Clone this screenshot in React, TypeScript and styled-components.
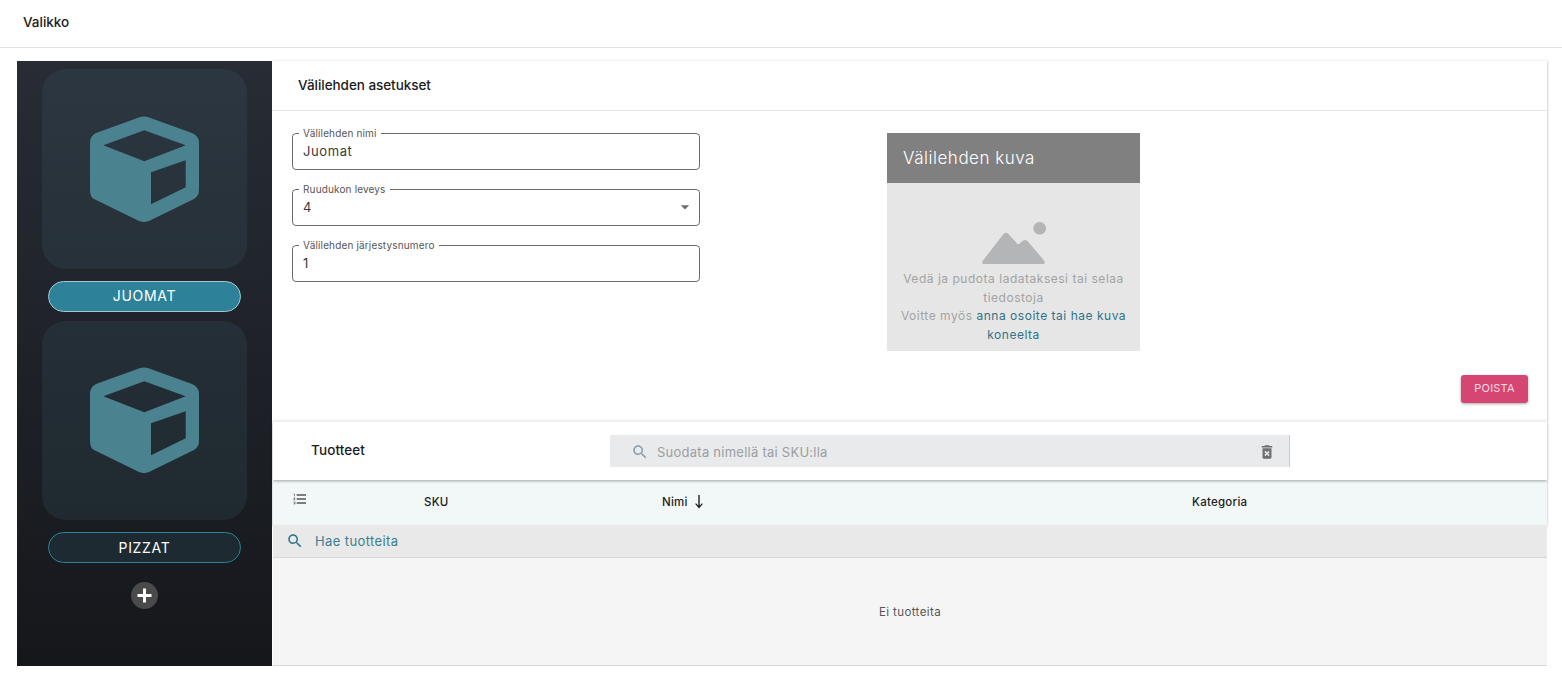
import React from "react"
import styled, { createGlobalStyle } from "styled-components"

const GlobalStyle = createGlobalStyle`
  html, body {
    margin: 0;
    padding: 0;
    background: #fff;
    font-family: Inter, "Open Sans", "Liberation Sans", sans-serif;
    color: #1c1c1c;
  }
  * { box-sizing: border-box; }
`

const TopBar = styled.header`
  height: 48px;
  padding: 0 23px;
  display: flex;
  align-items: center;
  border-bottom: 1px solid #e2e2e2;
  font-size: 13.5px;
  font-weight: 500;
  padding-bottom: 3px;
`

const Layout = styled.div`
  display: flex;
  padding: 13px 15px 0 17px;
`

const Sidebar = styled.aside`
  width: 255px;
  height: 605px;
  flex-shrink: 0;
  padding-top: 8px;
  display: flex;
  flex-direction: column;
  align-items: center;
  background: linear-gradient(180deg, #272c35 0%, #15171b 100%);
`

const Tile = styled.div`
  width: 205px;
  height: 199.5px;
  flex-shrink: 0;
  display: flex;
  align-items: center;
  justify-content: center;
  border-radius: 24px;
  background: rgba(75, 130, 144, 0.13);
`

const Pill = styled.div<{ $active?: boolean }>`
  width: 193px;
  height: 31px;
  margin: 12px 0 9px;
  padding-bottom: 1px;
  flex-shrink: 0;
  display: flex;
  align-items: center;
  justify-content: center;
  border-radius: 16px;
  font-size: 14px;
  font-weight: 400;
  letter-spacing: 0.7px;
  color: #fff;
  border: 1px solid ${props => props.$active ? "#a9c6cf" : "#2b8299"};
  background: ${props => props.$active ? "#2d8299" : "#1d2a32"};
`

const AddButton = styled.div`
  width: 27px;
  height: 27px;
  margin: 10px 0 0;
  border-radius: 50%;
  background: #4a4a4a;
  display: flex;
  align-items: center;
  justify-content: center;
`

const Content = styled.main`
  flex: 1;
  min-width: 0;
  display: flex;
  flex-direction: column;
`

const SettingsCard = styled.section`
  height: 360px;
  display: flex;
  flex-direction: column;
  box-shadow: 1px 0 2px rgba(0, 0, 0, 0.18);
`

const CardTitle = styled.h2`
  height: 50px;
  margin: 0;
  padding: 0 0 2px 26px;
  display: flex;
  align-items: center;
  border-bottom: 1px solid #e4e4e4;
  font-size: 13.5px;
  font-weight: 500;
  letter-spacing: -0.05px;
`

const CardBody = styled.div`
  flex: 1;
  padding: 22px 19px 0 20px;
  display: flex;
  flex-direction: column;
`

const FormRow = styled.div`
  display: flex;
`

const Fields = styled.div`
  width: 408px;
  display: flex;
  flex-direction: column;
  gap: 19px;
`

const Field = styled.div`
  position: relative;
  height: 37px;
  padding: 0 10px 1px;
  display: flex;
  align-items: center;
  justify-content: space-between;
  border: 1px solid #6b6b6b;
  border-radius: 4px;
  font-size: 13px;
  letter-spacing: 0.6px;
  color: #3a3a3a;
`

const FieldLabel = styled.label`
  position: absolute;
  left: 6px;
  top: -6px;
  padding: 0 4px;
  background: #fff;
  font-size: 10px;
  line-height: 11px;
  letter-spacing: 0.15px;
  color: #555;
`

const Caret = styled.svg`
  width: 20px;
  height: 20px;
  margin-right: -6px;
  fill: #6b6b6b;
`

const Dropzone = styled.div`
  width: 253px;
  height: 218px;
  margin-left: 187px;
  display: flex;
  flex-direction: column;
  background: #e6e6e6;
`

const DropzoneTitle = styled.div`
  height: 50px;
  padding: 0 16px 1px;
  display: flex;
  align-items: center;
  background: #808080;
  color: #fff;
  font-size: 17px;
  font-weight: 300;
  letter-spacing: 0.5px;
`

const DropzoneBody = styled.div`
  flex: 1;
  padding-top: 38px;
  display: flex;
  flex-direction: column;
  align-items: center;
  text-align: center;
  font-size: 12px;
  line-height: 18.7px;
  letter-spacing: 0.52px;
  color: #a3a3a3;
`

const DropzoneIcon = styled.svg`
  width: 64px;
  height: 44px;
  margin-bottom: 5px;
  flex-shrink: 0;
  fill: #b4b5b6;
`

const DropzoneLink = styled.span`
  color: #2f7387;
`

const Actions = styled.div`
  margin-top: 24px;
  display: flex;
  justify-content: flex-end;
`

const DeleteButton = styled.button`
  width: 67px;
  height: 28px;
  padding: 0 0 2px;
  border: 0;
  border-radius: 3px;
  background: #d64672;
  color: #f8dbe4;
  font-family: inherit;
  font-size: 11px;
  letter-spacing: 0.2px;
  box-shadow: 0 1px 3px rgba(0, 0, 0, 0.35);
`

const ProductsBar = styled.div`
  height: 59px;
  margin-left: 1px;
  position: relative;
  display: grid;
  grid-template-columns: 337px 680px;
  align-items: center;
  border-top: 1px solid #eee;
  box-shadow: 0 1px 3px rgba(0, 0, 0, 0.35);
  background: #fff;
`

const ProductsTitle = styled.div`
  padding: 0 0 2px 38px;
  font-size: 13.5px;
  font-weight: 500;
  letter-spacing: 0.1px;
`

const Filter = styled.div`
  height: 32px;
  padding: 1px 13px 0 21px;
  display: flex;
  align-items: center;
  gap: 8px;
  background: #e9eaec;
  border-right: 1px solid #ccc;
  font-size: 13px;
  letter-spacing: 0.25px;
  color: #9b9ea3;
`

const FilterText = styled.span`
  flex: 1;
`

const TableHead = styled.div`
  height: 45px;
  margin-left: 1px;
  padding-bottom: 1px;
  display: grid;
  grid-template-columns: 151px 238px 530px 1fr;
  align-items: center;
  background: #f2f7f7;
  box-shadow: 0 1px 2px rgba(0, 0, 0, 0.35);
  font-size: 11.5px;
  font-weight: 500;
  letter-spacing: 0.25px;
`

const HeadIcon = styled.svg`
  width: 16px;
  height: 16px;
  margin: 0 0 6px 19px;
  fill: #555;
  display: block;
`

const HeadCell = styled.div`
  display: flex;
  align-items: center;
  gap: 6px;
`

const SearchRow = styled.div`
  height: 33px;
  margin-left: 1px;
  padding: 0 0 1px 13px;
  display: flex;
  align-items: center;
  gap: 11px;
  background: #e9e9e9;
  border-bottom: 1px solid #d8d8d8;
  font-size: 13px;
  letter-spacing: 0.4px;
  color: #3a7f90;
`

const Empty = styled.div`
  height: 108px;
  margin-left: 1px;
  display: flex;
  align-items: center;
  justify-content: center;
  background: #f5f5f5;
  border-bottom: 1px solid #d8d8d8;
  font-size: 11.5px;
  letter-spacing: 0.4px;
  color: #555;
`

const Svg = styled.svg<{ $size: number, $color: string }>`
  width: ${props => props.$size}px;
  height: ${props => props.$size}px;
  fill: ${props => props.$color};
  flex-shrink: 0;
`

const searchPath = "M15.5 14h-.79l-.28-.27C15.41 12.59 16 11.11 16 9.5 16 5.91 13.09 3 9.5 3S3 5.91 3 9.5 5.91 16 9.5 16c1.61 0 3.09-.59 4.23-1.57l.27.28v.79l5 4.99L20.49 19l-4.99-5zm-6 0C7.01 14 5 11.99 5 9.5S7.01 5 9.5 5 14 7.01 14 9.5 11.99 14 9.5 14z"
const deletePath = "M6 19c0 1.1.9 2 2 2h8c1.1 0 2-.9 2-2V7H6v12zm2.46-7.12l1.41-1.41L12 12.59l2.12-2.12 1.41 1.41L13.41 14l2.12 2.12-1.41 1.41L12 15.41l-2.12 2.12-1.41-1.41L10.59 14l-2.13-2.12zM15.5 4l-1-1h-5l-1 1H5v2h14V4z"
const listPath = "M2 17h2v.5H3v1h1v.5H2v1h3v-4H2v1zm1-9h1V4H2v1h1v3zm-1 3h1.8L2 13.1v.9h3v-1H3.2L5 10.9V10H2v1zm5-6v2h14V5H7zm0 14h14v-2H7v2zm0-6h14v-2H7v2z"

const CubeIcon = () => (
  <svg width="110" height="106" viewBox="1 0 110 106">
    <path
      fill="#4a8290"
      fillRule="evenodd"
      d="M50.5 1.2Q55-.3 59.500 1.200L103 17Q110 20 110 27V74Q110 80 105 83L60 105Q55 107 50 105L5 83Q1 81 1 74V27Q1 20 7 17ZM14.300 29.200 55.300 14.200 96.700 29.200 55.300 45.200ZM62 56.200 96.700 44.200V71.200L62 88.200Z"
    />
  </svg>
)

const App: React.FC = () => {
  return (
    <>
      <GlobalStyle />
      <TopBar>Valikko</TopBar>
      <Layout>
        <Sidebar>
          <Tile><CubeIcon /></Tile>
          <Pill $active>JUOMAT</Pill>
          <Tile><CubeIcon /></Tile>
          <Pill>PIZZAT</Pill>
          <AddButton>
            <svg width="17" height="17" viewBox="0 0 17 17">
              <path fill="#fff" d="M7 1.500h3V7h5.500v3H10v5.500H7V10H1.500V7H7z" />
            </svg>
          </AddButton>
        </Sidebar>
        <Content>
          <SettingsCard>
            <CardTitle>Välilehden asetukset</CardTitle>
            <CardBody>
              <FormRow>
                <Fields>
                  <Field>
                    <FieldLabel>Välilehden nimi</FieldLabel>
                    Juomat
                  </Field>
                  <Field>
                    <FieldLabel>Ruudukon leveys</FieldLabel>
                    4
                    <Caret viewBox="0 0 24 24"><path d="M7 10l5 5 5-5z" /></Caret>
                  </Field>
                  <Field>
                    <FieldLabel>Välilehden järjestysnumero</FieldLabel>
                    1
                  </Field>
                </Fields>
                <Dropzone>
                  <DropzoneTitle>Välilehden kuva</DropzoneTitle>
                  <DropzoneBody>
                    <DropzoneIcon viewBox="0 0 64 44">
                      <circle cx="57.700" cy="7.300" r="6.300" />
                      <path d="M21.500 13Q24 10.700 26.500 13L35 22.500Q36 24 37.500 22.500L40.500 20Q43 18 45.500 20L62 39.500Q64 43 61 43H2Q-1 43 1 39.500Z" />
                    </DropzoneIcon>
                    <span>Vedä ja pudota ladataksesi tai selaa<br />tiedostoja</span>
                    <span>Voitte myös <DropzoneLink>anna osoite tai hae kuva<br />koneelta</DropzoneLink></span>
                  </DropzoneBody>
                </Dropzone>
              </FormRow>
              <Actions>
                <DeleteButton>POISTA</DeleteButton>
              </Actions>
            </CardBody>
          </SettingsCard>
          <ProductsBar>
            <ProductsTitle>Tuotteet</ProductsTitle>
            <Filter>
              <Svg $size={18} $color="#8a9aa8" viewBox="0 0 24 24"><path d={searchPath} /></Svg>
              <FilterText>Suodata nimellä tai SKU:lla</FilterText>
              <Svg $size={18} $color="#6f6f6f" viewBox="0 0 24 24"><path d={deletePath} /></Svg>
            </Filter>
          </ProductsBar>
          <TableHead>
            <HeadIcon viewBox="0 0 24 24"><path d={listPath} /></HeadIcon>
            <HeadCell>SKU</HeadCell>
            <HeadCell>
              Nimi
              <svg width="10" height="14" viewBox="0 0 10 14">
                <path fill="#222" d="M4.300 0h1.400v10.500L8 8.300l.8.700L5 13.500 1.200 9l.8-.7 2.300 2.200z" />
              </svg>
            </HeadCell>
            <HeadCell>Kategoria</HeadCell>
          </TableHead>
          <SearchRow>
            <Svg $size={18} $color="#2f7387" viewBox="0 0 24 24"><path d={searchPath} /></Svg>
            Hae tuotteita
          </SearchRow>
          <Empty>Ei tuotteita</Empty>
        </Content>
      </Layout>
    </>
  )
}

export default App
